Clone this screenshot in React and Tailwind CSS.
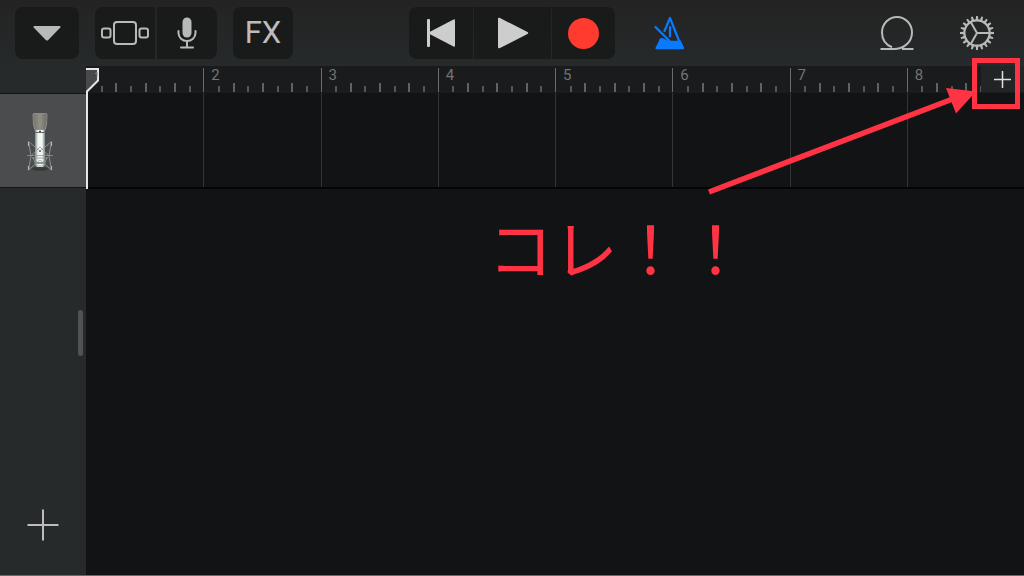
const BARS = [1, 2, 3, 4, 5, 6, 7, 8]
const TICKS = [0, 1, 2, 3, 4, 5, 6, 7]
const TEETH = Array.from({ length: 20 }, (_, i) => i * 18)

const BTN = 'flex items-center justify-center h-13 bg-[#191a1a] text-[#bcbcbc]'

const TracksIcon = () => (
  <svg width="48" height="26" viewBox="0 0 48 26" fill="none" stroke="#b9b9b9" strokeWidth="2" aria-hidden="true">
    <rect x="1" y="8.500" width="8.500" height="9" rx="2" />
    <rect x="13" y="2" width="22" height="22" rx="3" />
    <rect x="38.500" y="8.500" width="8.500" height="9" rx="2" />
  </svg>
)

const MicIcon = () => (
  <svg width="20" height="32" viewBox="0 0 20 32" fill="none" stroke="#b9b9b9" strokeWidth="2" strokeLinecap="round" aria-hidden="true">
    <rect x="5.5" y="0.5" width="9" height="20" rx="4.5" fill="#b9b9b9" stroke="none" />
    <path d="M1.5 14v2a8.5 8 0 0 0 17 0v-2M10 24v6M4 30.5h12" />
  </svg>
)

const MetronomeIcon = () => (
  <svg width="32" height="36" viewBox="0 0 32 36" fill="none" stroke="#0a7aff" strokeWidth="2.2" strokeLinecap="round" strokeLinejoin="round" aria-hidden="true">
    <path d="M10.500 16L16 3L25.500 27M16 12v9.500M1.500 12L15.500 26" />
    <path d="M6 23.500L2 34h28L26 25.800H14L8.500 23z" fill="#0a7aff" stroke="none" />
    <path d="M7 24.500L2.500 33.200h26.500L26 26.500" />
  </svg>
)

const LoopIcon = () => (
  <svg width="34" height="36" viewBox="0 0 34 36" fill="none" stroke="#b9b9b9" strokeWidth="2" aria-hidden="true">
    <path d="M0.5 34H14C22 34 32 28.500 32 17.500A15 15.500 0 1 0 2 17.500C2 25 6.500 30 12 32.200" />
    <path d="M22 34h11.500" />
  </svg>
)

const GearIcon = () => (
  <svg width="34" height="34" viewBox="-17 -17 34 34" fill="none" stroke="#b9b9b9" strokeWidth="2" aria-hidden="true">
    <circle r="12.600" strokeWidth="2.200" />
    {TEETH.map(a => (
      <path key={a} d="M13 -1.300L17 -0.900V0.900L13 1.300z" fill="#b9b9b9" stroke="none" transform={`rotate(${a})`} />
    ))}
    <path d="M0 0H12M0 0L-6 -10.400M0 0L-6 10.400" />
  </svg>
)

const CondenserMic = () => (
  <svg width="28" height="60" viewBox="0 0 28 60" fill="none" aria-hidden="true">
    <defs>
      <linearGradient id="body">
        <stop offset="0" stopColor="#7f8783" />
        <stop offset="0.3" stopColor="#eef5f1" />
        <stop offset="0.7" stopColor="#f4faf6" />
        <stop offset="1" stopColor="#7b827f" />
      </linearGradient>
      <linearGradient id="grille">
        <stop offset="0" stopColor="#76746c" />
        <stop offset="0.5" stopColor="#928f86" />
        <stop offset="1" stopColor="#6d6b64" />
      </linearGradient>
    </defs>
    <ellipse cx="14" cy="56" rx="8" ry="2" fill="#393a3b" />
    <path d="M7 1.500Q7 0.500 8 0.500h12Q21 0.500 21 1.500L20.500 12L19 17H9L7.500 12z" fill="url(#grille)" stroke="#96948d" strokeWidth="0.8" />
    <path d="M9 17h10v30l-1.500 7h-7L9 47z" fill="url(#body)" />
    <path d="M9 19.500h10" stroke="#686c6a" />
    <path d="M13 18.500h2M13 38h2" stroke="#444" strokeWidth="1.500" />
    <path d="M10 50h8" stroke="#707975" strokeWidth="1.500" />
    <path d="M2.500 28.500L5 43L2.500 57L14 47L25.500 57L23 43L25.500 28.500L14 38L2.500 28.500M5 43L14 34L23 43M7 44L10 53h8l3-9" stroke="#98a29d" strokeWidth="0.8" />
    <path d="M1 42.500h26M6 45h16" stroke="#8f9994" strokeWidth="0.8" />
    <path d="M2.500 29v4M25.500 29v4M2.500 53v4M25.500 53v4" stroke="#adb6b1" strokeWidth="1.200" />
  </svg>
)

function Toolbar() {
  return (
    <header className="grid grid-cols-[1fr_auto_1fr] items-start h-[66px] pt-[7px] px-[15px]">
      <div className="flex gap-4">
        <button aria-label="Menu" className={`${BTN} w-16 rounded-lg`}>
          <svg width="28" height="15" viewBox="0 0 28 15" fill="#b9b9b9" aria-hidden="true">
            <path d="M1 0h26q1 .5 .3 1.500L15 14.200q-1 .8-2 0L.7 1.500Q0 .5 1 0z" />
          </svg>
        </button>
        <div className="flex gap-0.5">
          <button aria-label="Tracks" className={`${BTN} w-[60px] rounded-l-lg`}><TracksIcon /></button>
          <button aria-label="Instrument" className={`${BTN} w-[60px] rounded-r-lg`}><MicIcon /></button>
        </div>
        <button className={`${BTN} w-[60px] rounded-lg text-[31px]`}>FX</button>
      </div>

      <div className="flex gap-px">
        <button aria-label="Rewind" className={`${BTN} w-16 rounded-l-lg`}>
          <svg width="30" height="28" viewBox="0 0 30 28" fill="#cdcdcd" aria-hidden="true">
            <rect x="1" y="0" width="3" height="28" rx="1" />
            <path d="M27.500 .5Q29 -.2 29 1.500v25Q29 28.200 27.500 27.500L4 15.200Q2.500 14 4 12.800z" />
          </svg>
        </button>
        <button aria-label="Play" className={`${BTN} w-[77px] rounded-none`}>
          <svg width="32" height="32" viewBox="0 0 32 32" fill="#cdcdcd" aria-hidden="true">
            <path d="M2.500 .8Q1 .2 1 2v28q0 1.800 1.500 1.200L30.500 17q1.500-1 0-2z" />
          </svg>
        </button>
        <button aria-label="Record" className={`${BTN} w-[63px] rounded-r-lg`}>
          <span className="size-[31px] rounded-full bg-[#ff3b30]" />
        </button>
      </div>

      <div className="flex items-center justify-between h-13 pl-[39px] pr-[15px]">
        <button aria-label="Metronome"><MetronomeIcon /></button>
        <div className="flex items-center gap-[46px]">
          <button aria-label="Loops"><LoopIcon /></button>
          <button aria-label="Settings"><GearIcon /></button>
        </div>
      </div>
    </header>
  )
}

function Sidebar() {
  return (
    <aside className="flex flex-col w-[86px] shrink-0 bg-[#262a2b]">
      <div className="h-[27px]" />
      <button aria-label="Audio track"
        className="flex items-center justify-center h-[95px] pr-1.5 pt-1 bg-[#4b4c4e] border-y border-[#131414]">
        <CondenserMic />
      </button>
      <div className="flex-1 flex flex-col justify-between pt-[122px] pb-[34px]">
        <div className="self-end mr-[3px] w-[5px] h-[46px] rounded-full bg-[#505254]" />
        <button aria-label="Add track" className="self-center">
          <svg width="32" height="32" viewBox="0 0 32 32" stroke="#bdbdbd" strokeWidth="2" aria-hidden="true">
            <path d="M16 0.500v31M0.500 16h31" />
          </svg>
        </button>
      </div>
    </aside>
  )
}

function Ruler() {
  return (
    <div className="grid grid-cols-8 h-[27px] bg-[#1a1b1c]">
      {BARS.map(n => (
        <div key={n} className="relative grid grid-cols-8 items-end pb-px pt-0.5">
          {TICKS.map(t => (
            <span key={t}
              className={`${t === 0 ? 'h-6 border-l border-[#6a6b6c]' : t % 2 ? 'h-1.5 border-l-2 border-[#565758]' : 'h-[9px] border-l-2 border-[#606162]'}`} />
          ))}
          {n > 1 && (
            <span className="absolute left-2 top-px text-[15px] leading-4 text-[#737475]">{n}</span>
          )}
        </div>
      ))}
    </div>
  )
}

function Timeline() {
  return (
    <main className="relative flex-1 min-w-0 bg-[#121315]">
      <Ruler />
      <div className="grid grid-cols-8 h-24 border-b-2 border-[#050506]">
        {BARS.map(n => <div key={n} className="border-l border-[#333436]" />)}
      </div>

      {/* Playhead */}
      <svg className="absolute left-0 top-0.5" width="14" height="121" viewBox="0 0 14 121" fill="none" aria-hidden="true">
        <path d="M0 1h12v11.500L1 23.500V24H0z" fill="#48494b" />
        <path d="M0 1h12v11.500L1 23.500V121" stroke="#e6e6e6" strokeWidth="2" />
        <path d="M9 6l2-2v5" stroke="#7b7c7d" />
      </svg>

      <button aria-label="Add section"
        className="absolute right-0 top-0 flex items-center justify-center w-[43px] h-[26px] bg-[#222526]">
        <svg width="17" height="17" viewBox="0 0 17 17" stroke="#e0e0e0" strokeWidth="1.500" aria-hidden="true">
          <path d="M8.500 0v17M0 8.500h17" />
        </svg>
      </button>

      {/* Callout */}
      <div className="absolute right-1 -top-2 w-12 h-[51px] border-5 border-[#ff3344]" />
      <svg className="absolute right-12 top-[18px]" width="272" height="112" viewBox="0 0 272 112" aria-hidden="true">
        <path d="M5 108L250 14.500" stroke="#ff3344" strokeWidth="5.500" />
        <path d="M272 7.500L242 4L252 29.500z" fill="#ff3344" />
      </svg>
      <p className="absolute right-[276px] top-[140px] text-[65px] leading-[80px] whitespace-nowrap text-[#ff3344] font-['Noto_Sans_CJK_JP',sans-serif]">
        コレ！！
      </p>
    </main>
  )
}

export default function App() {
  return (
    <div className="flex flex-col min-h-screen overflow-hidden border-b border-[#6a6869] bg-linear-to-b from-[#232323] to-[#262a2b] to-[66px] font-[Roboto,sans-serif]">
      <Toolbar />
      <div className="flex flex-1">
        <Sidebar />
        <Timeline />
      </div>
    </div>
  )
}
